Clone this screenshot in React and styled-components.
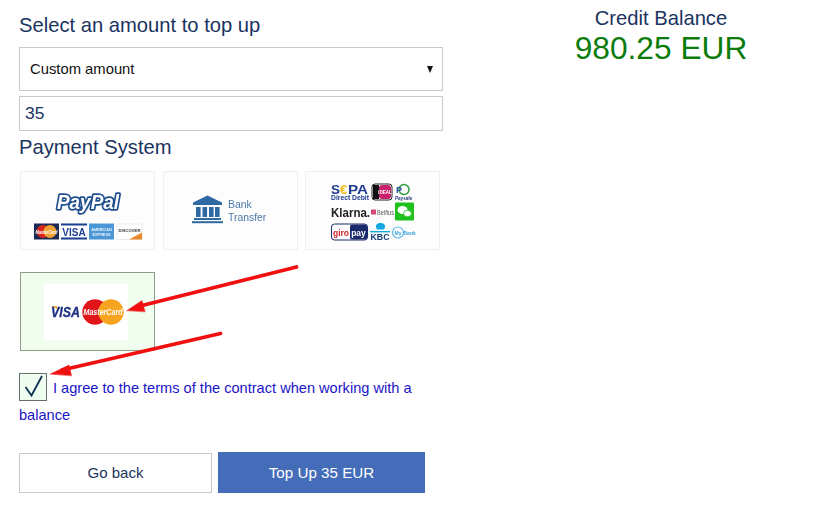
import React from "react";
import styled, { createGlobalStyle } from "styled-components";

const Global = createGlobalStyle`
  html, body { margin: 0; padding: 0; background: #fff; }
  body { font-family: "Liberation Sans", Arial, sans-serif; color: #1b3360; }
  * { box-sizing: border-box; }
`;

const Page = styled.div`
  position: relative;
  width: 819px;
  height: 505px;
  display: flex;
  align-items: flex-start;
  overflow: hidden;
`;
const Left = styled.main`
  width: 424px;
  margin-left: 19px;
  display: flex;
  flex-direction: column;
`;
const Right = styled.aside`
  width: 316px;
  margin-left: 60px;
  padding-top: 7px;
  display: flex;
  flex-direction: column;
  align-items: center;
`;
const BalanceLabel = styled.div`
  font-size: 20.2px;
  line-height: 23px;
  color: #1b3360;
`;
const BalanceValue = styled.div`
  font-size: 31.7px;
  line-height: 37px;
  color: #0b7c0b;
`;
const Heading = styled.h2`
  margin: ${(p) => p.$top}px 0 0;
  font-size: 20.2px;
  line-height: 23px;
  font-weight: 400;
  color: #1b3360;
`;
const SelectBox = styled.div`
  margin-top: 10px;
  height: 44px;
  border: 1px solid #c9c9c9;
  padding: 0 10px;
  display: flex;
  align-items: center;
  justify-content: space-between;
  font-size: 14.8px;
  color: #111;
`;
const Caret = styled.span`
  width: 0;
  height: 0;
  margin-right: -1px;
  border-left: 3.5px solid transparent;
  border-right: 3.5px solid transparent;
  border-top: 7px solid #111;
`;
const AmountInput = styled.div`
  margin-top: 5px;
  height: 35px;
  border: 1px solid #c9c9c9;
  padding: 0 5px;
  display: flex;
  align-items: center;
  font-size: 17.4px;
  color: #1b3360;
`;
const Methods = styled.div`
  margin: 12px 0 0 1px;
  display: grid;
  grid-template-columns: 143px 142px 135px;
  row-gap: 22px;
`;
const Method = styled.div`
  width: 135px;
  height: 79px;
  border: 1px solid ${(p) => (p.$active ? "#8c9f84" : "#eff0f2")};
  background: ${(p) => (p.$active ? "#f1fdee" : "#fdfdfe")};
  display: flex;
  align-items: center;
  justify-content: center;
  & > svg { filter: blur(0.3px); display: block; overflow: visible; }
`;
const WhitePlate = styled.div`
  width: 84px;
  height: 56px;
  margin-right: 3px;
  background: #fff;
  display: flex;
  align-items: center;
  justify-content: center;
  & > svg { filter: blur(0.2px); display: block; overflow: visible; }
`;
const Agreement = styled.div`
  margin-top: 22px;
  font-size: 14.6px;
  line-height: 27px;
  padding-top: 2px;
  color: #1a14c8;
`;
const Check = styled.span`
  display: inline-flex;
  width: 28px;
  height: 28px;
  margin: -2px 6px 0 0;
  vertical-align: top;
  border: 1px solid #66706a;
  background: #effdf1;
  align-items: center;
  justify-content: center;
`;
const Actions = styled.div`
  margin-top: 23px;
  display: flex;
  gap: 6px;
  align-items: center;
`;
const BackButton = styled.div`
  width: 193px;
  height: 40px;
  border: 1px solid #c9c9c9;
  display: flex;
  align-items: center;
  justify-content: center;
  font-size: 15px;
  color: #1b3360;
`;
const TopUpButton = styled.div`
  width: 207px;
  height: 41px;
  background: #446cb8;
  display: flex;
  align-items: center;
  justify-content: center;
  font-size: 15.2px;
  color: #fff;
`;
const Arrows = styled.svg`
  position: absolute;
  left: 0;
  top: 0;
  pointer-events: none;
`;

const sans = "Liberation Sans, Arial, sans-serif";

const PayPalLogo = () => (
  <svg width="110" height="68" viewBox="0 0 110 68">
    <text x="55" y="32" textAnchor="middle" fontFamily={sans} fontSize="20" fontWeight="700" fontStyle="italic" fill="#fff" stroke="#1f4f8f" strokeWidth="3.6" paintOrder="stroke" strokeLinejoin="round" textLength="62" lengthAdjust="spacingAndGlyphs">PayPal</text>
    <g transform="translate(0 16.5)">
      <rect x="1" y="30" width="25" height="16" fill="#1d2a55" />
      <circle cx="10" cy="38" r="6.5" fill="#d8261c" />
      <circle cx="17" cy="38" r="6.5" fill="#f0a030" />
      <text x="13.5" y="40" textAnchor="middle" fontFamily={sans} fontSize="5" fontStyle="italic" fontWeight="700" fill="#fff" textLength="22" lengthAdjust="spacingAndGlyphs">MasterCard</text>
      <rect x="28" y="30" width="26" height="16" fill="#fff" stroke="#dfe3ee" strokeWidth=".5" />
      <rect x="28" y="30" width="26" height="2" fill="#1c3f8f" />
      <rect x="28" y="44" width="26" height="2" fill="#1c3f8f" />
      <text x="41" y="42" textAnchor="middle" fontFamily={sans} fontSize="10" fontWeight="700" fill="#1c3f8f">VISA</text>
      <rect x="56" y="30" width="25" height="16" fill="#4b97d6" />
      <text x="68.5" y="37" textAnchor="middle" fontFamily={sans} fontSize="3.8" fontWeight="700" fill="#e8f3fb">AMERICAN</text>
      <text x="68.5" y="42" textAnchor="middle" fontFamily={sans} fontSize="3.8" fontWeight="700" fill="#e8f3fb">EXPRESS</text>
      <rect x="84" y="30.5" width="25" height="15.5" fill="#fff" stroke="#d5d5d5" strokeWidth=".5" />
      <path d="M96 46 L109 39 V46 Z" fill="#e98a2c" />
      <text x="96.5" y="38" textAnchor="middle" fontFamily={sans} fontSize="4.2" fontWeight="700" fill="#333">DISCOVER</text>
    </g>
  </svg>
);

const BankLogo = () => (
  <svg width="78" height="32" viewBox="0 0 78 32">
    <g fill="#2d6aa3">
      <path d="M15.5 0.5 L30 7.5 V10 H1 V7.5 Z" />
      <rect x="4" y="12" width="4.6" height="10" />
      <rect x="10.5" y="12" width="4.6" height="10" />
      <rect x="17" y="12" width="4.6" height="10" />
      <rect x="23" y="12" width="4.6" height="10" />
      <rect x="2" y="23" width="27" height="2" />
      <rect x="0" y="26.2" width="31" height="2" />
    </g>
    <text x="36" y="13" fontFamily={sans} fontSize="10.4" fill="#4c79a8">Bank</text>
    <text x="36" y="25.5" fontFamily={sans} fontSize="10.4" fill="#4c79a8">Transfer</text>
  </svg>
);

const BanksLogo = () => (
  <svg width="90" height="62" viewBox="0 0 90 62">
    <g transform="translate(3 3.5)">
      <text x="0" y="10" fontFamily={sans} fontSize="13.5" fontWeight="700" fill="#1c3a8f">S</text>
      <text x="9" y="10" fontFamily={sans} fontSize="13" fontWeight="700" fill="#f3c218">€</text>
      <text x="17" y="10" fontFamily={sans} fontSize="13.5" fontWeight="700" fill="#1c3a8f" textLength="20" lengthAdjust="spacingAndGlyphs">PA</text>
      <text x="0" y="16.5" fontFamily={sans} fontSize="7.5" fontWeight="700" fill="#1c3a8f" textLength="38" lengthAdjust="spacingAndGlyphs">Direct Debit</text>
      <rect x="41" y="0.5" width="20" height="16" rx="3" fill="#fff" stroke="#222" strokeWidth="1" />
      <rect x="42" y="1.5" width="6" height="14" fill="#111" />
      <rect x="48" y="1.5" width="12" height="14" rx="3" fill="#cc1f6b" />
      <text x="54" y="10.5" textAnchor="middle" fontFamily={sans} fontSize="4.6" fontWeight="700" fill="#fff">iDEAL</text>
      <circle cx="73" cy="6" r="5" fill="none" stroke="#2e9e3e" strokeWidth="1.5" />
      <text x="65" y="9" fontFamily={sans} fontSize="9" fontWeight="700" fill="#2a4fa0">P</text>
      <text x="64" y="16.5" fontFamily={sans} fontSize="4.6" fontWeight="700" fill="#28407f">Paysafe</text>
      <text x="0" y="33" fontFamily={sans} fontSize="13" fontWeight="700" fill="#222" textLength="39" lengthAdjust="spacingAndGlyphs">Klarna.</text>
      <rect x="40" y="26" width="5" height="5" fill="#d8487a" />
      <text x="46" y="31.5" fontFamily={sans} fontSize="6.5" fill="#555" textLength="17" lengthAdjust="spacingAndGlyphs">Belfius</text>
      <rect x="64" y="19" width="19" height="18" rx="1" fill="#1fc11f" />
      <ellipse cx="71.5" cy="26.5" rx="5" ry="4" fill="#fff" />
      <ellipse cx="76.5" cy="30" rx="4" ry="3.2" fill="#fff" stroke="#1fc11f" strokeWidth=".8" />
      <rect x="0.5" y="40.5" width="36" height="16" rx="3" fill="#fff" stroke="#1a2a6c" strokeWidth="1" />
      <rect x="19" y="41" width="17" height="15" rx="2" fill="#1a2a6c" />
      <text x="10" y="52" textAnchor="middle" fontFamily={sans} fontSize="8.5" fontWeight="700" fill="#d3232a">giro</text>
      <text x="27.5" y="52" textAnchor="middle" fontFamily={sans} fontSize="8.5" fontWeight="700" fill="#fff">pay</text>
      <path d="M46 46 C 43 41 47 39.5 49.5 39.5 C 52 39.5 56 41 53 46 Z" fill="#12a8e0" />
      <rect x="39" y="47.5" width="20" height="1.4" fill="#12a8e0" />
      <text x="49" y="56.5" textAnchor="middle" fontFamily={sans} fontSize="8.5" fontWeight="700" fill="#123a7a" textLength="19" lengthAdjust="spacingAndGlyphs">KBC</text>
      <circle cx="67" cy="49" r="5.5" fill="#fff" stroke="#5cb6e4" strokeWidth="1.2" />
      <text x="67" y="51" textAnchor="middle" fontFamily={sans} fontSize="5" fontWeight="700" fill="#3aa2d8">My</text>
      <text x="72.5" y="51" fontFamily={sans} fontSize="5" fontWeight="700" fill="#3aa2d8">Bank</text>
    </g>
  </svg>
);

const VisaMcLogo = () => (
  <svg width="76" height="28" viewBox="0 0 76 28">
    <path d="M3 8 L9 8 L11 12 Z" fill="#e9a83a" />
    <text x="3" y="19" fontFamily={sans} fontSize="14" fontWeight="700" fontStyle="italic" fill="#1a2f80" stroke="#1a2f80" strokeWidth=".3" textLength="29" lengthAdjust="spacingAndGlyphs">VISA</text>
    <circle cx="47" cy="14" r="12.7" fill="#e0161b" />
    <circle cx="63" cy="14" r="12.7" fill="#f7a521" />
    <text x="55" y="17" textAnchor="middle" fontFamily={sans} fontSize="8.3" fontWeight="700" fontStyle="italic" fill="#fff" textLength="39" lengthAdjust="spacingAndGlyphs">MasterCard</text>
  </svg>
);

export default function App() {
  return (
    <Page>
      <Global />
      <Left>
        <Heading $top={14}>Select an amount to top up</Heading>
        <SelectBox>
          <span>Custom amount</span>
          <Caret />
        </SelectBox>
        <AmountInput>35</AmountInput>
        <Heading $top={5}>Payment System</Heading>
        <Methods>
          <Method><PayPalLogo /></Method>
          <Method><BankLogo /></Method>
          <Method><BanksLogo /></Method>
          <Method $active>
            <WhitePlate><VisaMcLogo /></WhitePlate>
          </Method>
        </Methods>
        <Agreement>
          <Check>
            <svg width="24" height="24" viewBox="0 0 24 24" fill="none">
              <path d="M4.5 12 L10.5 20.5 L21 1" stroke="#0f2f55" strokeWidth="1.8" />
            </svg>
          </Check>
          I agree to the terms of the contract when working with a balance
        </Agreement>
        <Actions>
          <BackButton>Go back</BackButton>
          <TopUpButton>Top Up 35 EUR</TopUpButton>
        </Actions>
      </Left>
      <Right>
        <BalanceLabel>Credit Balance</BalanceLabel>
        <BalanceValue>980.25 EUR</BalanceValue>
      </Right>
      <Arrows width="819" height="505" viewBox="0 0 819 505">
        <g fill="#f01010" stroke="#f01010" strokeLinecap="round">
          <line x1="296.5" y1="267" x2="138" y2="306.5" strokeWidth="3.8" />
          <path d="M127 310.5 L142 300.5 L145 311.5 Z" strokeWidth="0.5" />
          <line x1="220.5" y1="333.5" x2="62" y2="370" strokeWidth="3.8" />
          <path d="M50.5 374 L69 365 L71.5 375.5 Z" strokeWidth="0.5" />
        </g>
      </Arrows>
    </Page>
  );
}
